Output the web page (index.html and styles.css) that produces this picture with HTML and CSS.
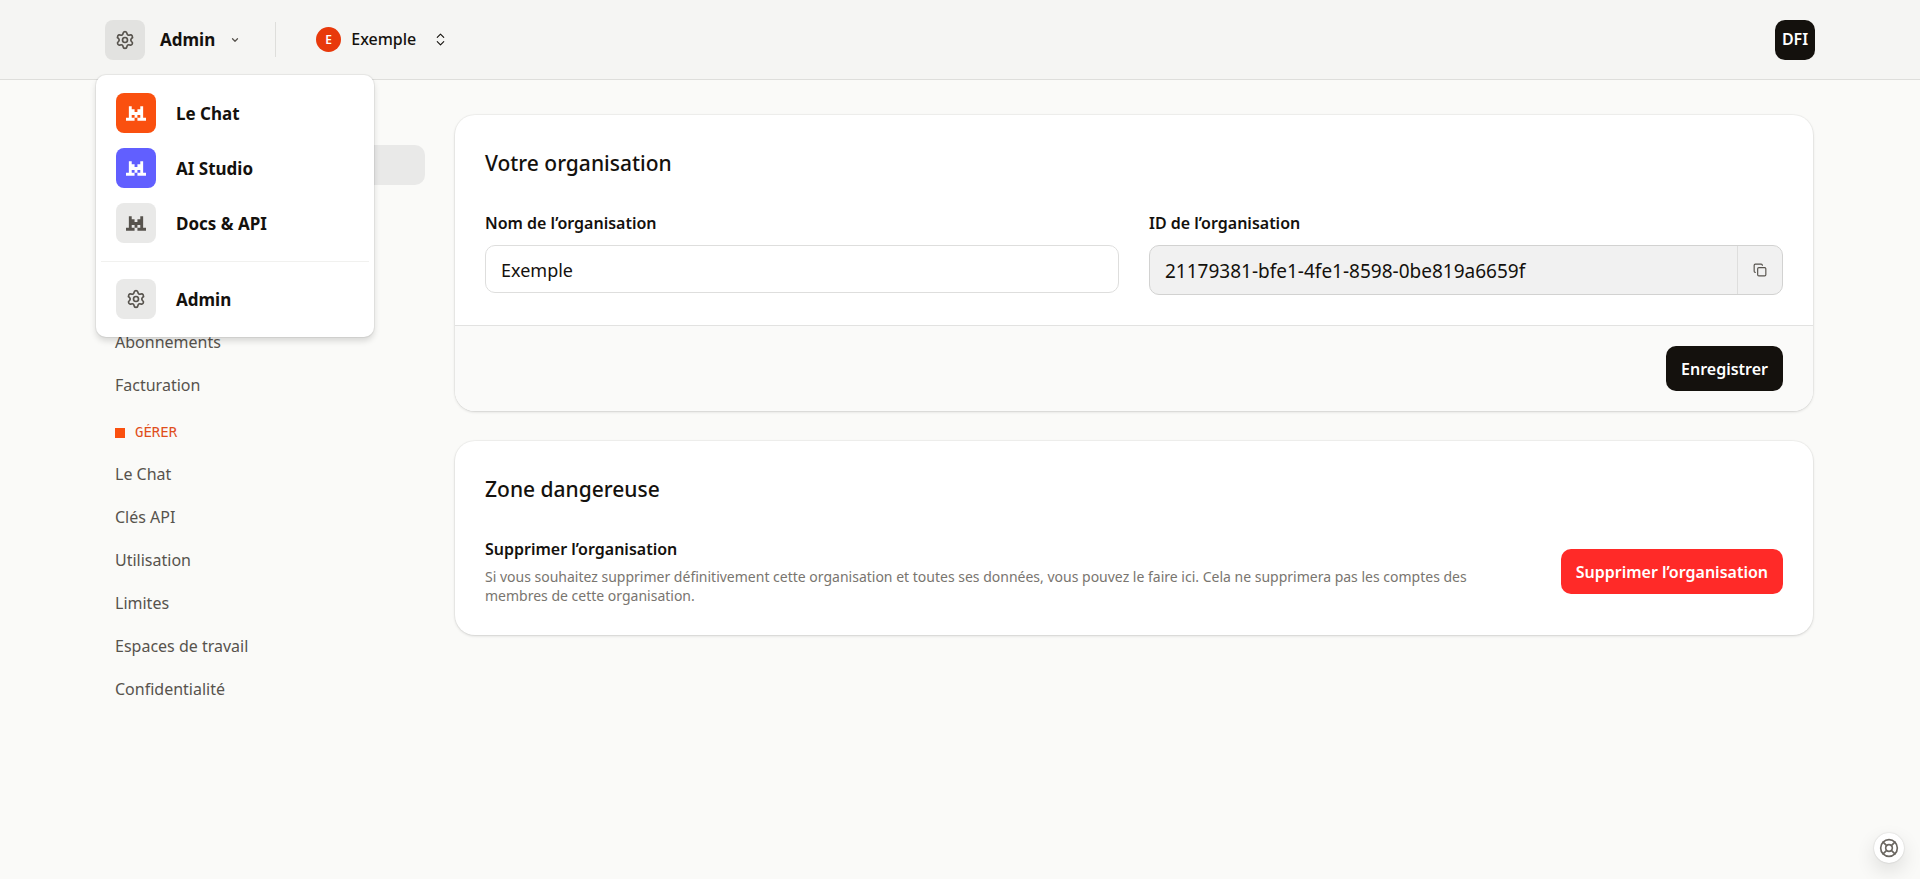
FILE: index.html
```html
<!DOCTYPE html>
<html lang="fr">
<head>
<meta charset="utf-8">
<meta name="viewport" content="width=device-width, initial-scale=1">
<title>Admin – Organisation</title>
<link rel="stylesheet" href="styles.css">
</head>
<body>
<svg class="sprite" aria-hidden="true">
  <symbol id="gear" viewBox="0 0 24 24"><path d="M9.671 4.136a2.340 2.340 0 0 1 4.659 0 2.340 2.340 0 0 0 3.319 1.915 2.340 2.340 0 0 1 2.330 4.033 2.340 2.340 0 0 0 0 3.831 2.340 2.340 0 0 1-2.330 4.033 2.340 2.340 0 0 0-3.319 1.915 2.340 2.340 0 0 1-4.659 0 2.340 2.340 0 0 0-3.320-1.915 2.340 2.340 0 0 1-2.330-4.033 2.340 2.340 0 0 0 0-3.831A2.340 2.340 0 0 1 6.350 6.051a2.340 2.340 0 0 0 3.319-1.915"/><circle cx="12" cy="12" r="3"/></symbol>
  <symbol id="cat" viewBox="0 0 7 5"><path d="M1 0h1v1h1v1h1V1h1V0h1v4h1v1H4V4h1V3H4v1H3V3H2v1h1v1H0V4h1z"/></symbol>
</svg>

<header class="topbar">
  <div class="switchers">
    <div class="app-switch">
      <button class="app-button" type="button" aria-expanded="true">
        <span class="tile tile-dark"><svg class="icon"><use href="#gear"/></svg></span>
        <span class="app-name">Admin</span>
        <svg class="caret" viewBox="0 0 24 24"><path d="m6 9 6 6 6-6"/></svg>
      </button>
      <nav class="menu" aria-label="Applications">
        <a class="menu-item" href="#"><span class="tile tile-orange"><svg class="cat"><use href="#cat"/></svg></span>Le Chat</a>
        <a class="menu-item" href="#"><span class="tile tile-violet"><svg class="cat"><use href="#cat"/></svg></span>AI Studio</a>
        <a class="menu-item" href="#"><span class="tile tile-gray"><svg class="cat"><use href="#cat"/></svg></span>Docs &amp; API</a>
        <hr class="menu-rule">
        <a class="menu-item" href="#"><span class="tile tile-gray"><svg class="icon"><use href="#gear"/></svg></span>Admin</a>
      </nav>
    </div>
    <span class="divider"></span>
    <button class="org-button" type="button">
      <span class="org-badge">E</span>
      <span>Exemple</span>
      <svg class="updown" viewBox="0 0 24 24"><path d="m6 16 6 6 6-6M6 8l6-6 6 6"/></svg>
    </button>
  </div>
  <button class="avatar" type="button">DFI</button>
</header>

<div class="layout">
  <nav class="sidebar" aria-label="Navigation">
    <a class="side-link active" href="#" aria-label="Organisation" aria-current="page"></a>
    <div class="side-group first-group">
      <a class="side-link" href="#">Abonnements</a>
      <a class="side-link" href="#">Facturation</a>
    </div>
    <h2 class="side-title">GÉRER</h2>
    <div class="side-group">
      <a class="side-link" href="#">Le Chat</a>
      <a class="side-link" href="#">Clés API</a>
      <a class="side-link" href="#">Utilisation</a>
      <a class="side-link" href="#">Limites</a>
      <a class="side-link" href="#">Espaces de travail</a>
      <a class="side-link" href="#">Confidentialité</a>
    </div>
  </nav>

  <main class="content">
    <form class="card">
      <div class="card-body">
        <h1 class="card-title">Votre organisation</h1>
        <div class="fields">
          <div class="field">
            <label class="label" for="org-name">Nom de l’organisation</label>
            <input class="input" id="org-name" type="text" value="Exemple">
          </div>
          <div class="field">
            <label class="label" for="org-id">ID de l’organisation</label>
            <div class="copy-field">
              <input class="copy-input" id="org-id" type="text" value="21179381-bfe1-4fe1-8598-0be819a6659f" readonly>
              <button class="copy-button" type="button" aria-label="Copier">
                <svg class="copy-icon" viewBox="0 0 24 24"><rect x="8" y="8" width="14" height="14" rx="2"/><path d="M4 16c-1.100 0-2-.9-2-2V4c0-1.100.9-2 2-2h10c1.100 0 2 .9 2 2"/></svg>
              </button>
            </div>
          </div>
        </div>
      </div>
      <div class="card-footer"><button class="button" type="button">Enregistrer</button></div>
    </form>

    <section class="card">
      <div class="card-body">
        <h2 class="card-title">Zone dangereuse</h2>
        <div class="danger-row">
          <div class="danger-text">
            <h3 class="label">Supprimer l’organisation</h3>
            <p class="hint">Si vous souhaitez supprimer définitivement cette organisation et toutes ses données, vous pouvez le faire ici. Cela ne supprimera pas les comptes des membres de cette organisation.</p>
          </div>
          <button class="button button-danger" type="button">Supprimer l’organisation</button>
        </div>
      </div>
    </section>
  </main>
</div>

<button class="help" type="button" aria-label="Aide">
  <svg class="help-icon" viewBox="0 0 24 24"><circle cx="12" cy="12" r="10"/><circle cx="12" cy="12" r="4"/><path d="m4.930 4.930 4.240 4.240M14.830 9.170l4.240-4.240M14.830 14.830l4.240 4.240M9.170 14.830l-4.240 4.240"/></svg>
</button>
</body>
</html>
```
FILE: styles.css
```css
* { box-sizing: border-box; }

body {
  margin: 0;
  min-height: 100vh;
  background: #fafaf8;
  color: #14110d;
  font: 400 16px/25px "Segoe UI", "Noto Sans", "Open Sans", sans-serif;
}

button, input { font: inherit; color: inherit; }
button { border: 0; padding: 0; background: none; cursor: pointer; }
a { color: inherit; text-decoration: none; }
h1, h2, h3, p { margin: 0; }
svg { fill: none; stroke: currentColor; stroke-width: 2; stroke-linecap: round; stroke-linejoin: round; flex: none; }

.sprite { position: absolute; width: 0; height: 0; }

/* Top bar */
.topbar {
  display: flex;
  align-items: center;
  justify-content: space-between;
  height: 80px;
  padding: 0 105px;
  background: #f5f5f3;
  border-bottom: 1px solid #dededb;
}
.switchers { display: flex; align-items: center; }
.app-switch { position: relative; }
.app-button { display: flex; align-items: center; font-size: 17px; font-weight: 700; }
.app-name { margin: 0 15px; }
.tile {
  display: flex;
  align-items: center;
  justify-content: center;
  width: 40px;
  height: 40px;
  border-radius: 8px;
  flex: none;
  color: #57534d;
}
.tile-dark { background: #e2e2e0; }
.tile-gray { background: #e9e9e8; }
.tile-orange { background: #fa500f; color: #fff; }
.tile-violet { background: #615fff; color: #fff; }
.icon { width: 20px; height: 20px; }
.cat { width: 20px; height: 15px; fill: currentColor; stroke: none; }
.caret { width: 10px; height: 10px; color: #57534d; stroke-width: 3; }
.divider { width: 1px; height: 35px; margin: 0 40px 0 35px; background: #dededb; }
.org-button { display: flex; align-items: center; font-weight: 500; }
.org-badge {
  display: flex;
  align-items: center;
  justify-content: center;
  width: 25px;
  height: 25px;
  margin-right: 10px;
  border-radius: 50%;
  background: #e8390b;
  color: #fff;
  font-size: 12px;
  font-weight: 600;
}
.updown { width: 13px; height: 13px; margin-left: 18px; }
.avatar {
  width: 40px;
  height: 40px;
  border-radius: 10px;
  background: #14110d;
  color: #fff;
  font-weight: 600;
}

/* Application menu */
.menu {
  position: absolute;
  z-index: 2;
  top: 55px;
  left: -9px;
  width: 278px;
  padding: 11px 5px 10px;
  background: #fff;
  border-radius: 10px;
  box-shadow: 0 0 0 1px rgb(0 0 0 / 5%), 0 4px 6px rgb(0 0 0 / 14%);
}
.menu-item {
  display: flex;
  align-items: center;
  gap: 20px;
  height: 55px;
  padding: 0 15px;
  font-size: 17px;
  font-weight: 700;
}
.menu-rule { height: 1px; margin: 10px 0; border: 0; background: #f1f1ef; }

/* Page */
.layout {
  display: grid;
  grid-template-columns: 320px minmax(0, 1fr);
  gap: 30px;
  padding: 35px 107px 30px 105px;
}
.sidebar { padding-top: 30px; color: #57534d; }
.side-link {
  display: flex;
  align-items: center;
  height: 40px;
  padding: 0 10px;
  border-radius: 10px;
}
.side-link.active { background: #e9e9e8; }
.side-group { display: grid; gap: 3px; }
.side-group + .side-title { margin-top: 15px; }
.first-group { margin-top: 137px; }
.side-title {
  display: flex;
  align-items: center;
  gap: 10px;
  height: 25px;
  margin-bottom: 9px;
  padding: 0 10px;
  color: #e04e1c;
  font: 400 14px/25px Consolas, "DejaVu Sans Mono", monospace;
}
.side-title::before { content: ""; width: 10px; height: 10px; background: #fa500f; }
.content { display: grid; gap: 30px; align-content: start; }

/* Cards */
.card {
  overflow: hidden;
  border-radius: 20px;
  background: #fff;
  box-shadow: 0 0 0 1px rgb(0 0 0 / 3%), 0 1px 3px rgb(0 0 0 / 14%);
}
.card-body { padding: 30px; }
.card-title { margin-bottom: 30px; font-size: 21px; line-height: 36px; font-weight: 500; }
.fields { display: grid; grid-template-columns: 1fr 1fr; gap: 30px; }
.field { display: flex; flex-direction: column; gap: 9px; }
.label { font-size: 16px; line-height: 25px; font-weight: 600; }
.input {
  width: 100%;
  height: 48px;
  padding: 2px 15px 0;
  border: 1px solid #dededd;
  border-radius: 10px;
  background: #fff;
  font-size: 18px;
}
.copy-field {
  display: flex;
  height: 50px;
  overflow: hidden;
  border: 1px solid #d2d2d1;
  border-radius: 10px;
  background: #f1f1f1;
}
.copy-input { flex: 1; min-width: 0; padding: 2px 15px 0; border: 0; background: none; font-size: 19px; }
.copy-button {
  display: flex;
  align-items: center;
  justify-content: center;
  width: 45px;
  border-left: 1px solid #dededd;
  color: #57534d;
}
.copy-icon { width: 14px; height: 14px; }
.card-footer {
  display: flex;
  justify-content: flex-end;
  padding: 20px 30px;
  border-top: 1px solid #e2e2e1;
  background: #fafaf9;
}
.button {
  height: 45px;
  padding: 2px 15px 0;
  border-radius: 10px;
  background: #14110d;
  color: #fff;
  font-weight: 600;
  white-space: nowrap;
}
.button-danger { background: #ff2a28; }
.danger-row { display: flex; align-items: center; justify-content: space-between; gap: 30px; }
.danger-text { display: grid; gap: 5px; }
.hint { color: #79756f; font-size: 14px; line-height: 19px; }

/* Help bubble */
.help {
  position: fixed;
  right: 16px;
  bottom: 16px;
  display: flex;
  align-items: center;
  justify-content: center;
  width: 30px;
  height: 30px;
  border-radius: 50%;
  background: #fff;
  color: #6b6761;
  box-shadow: 0 0 2px rgb(0 0 0 / 20%), 0 8px 20px rgb(0 0 0 / 12%);
}
.help-icon { width: 20px; height: 20px; }
```
